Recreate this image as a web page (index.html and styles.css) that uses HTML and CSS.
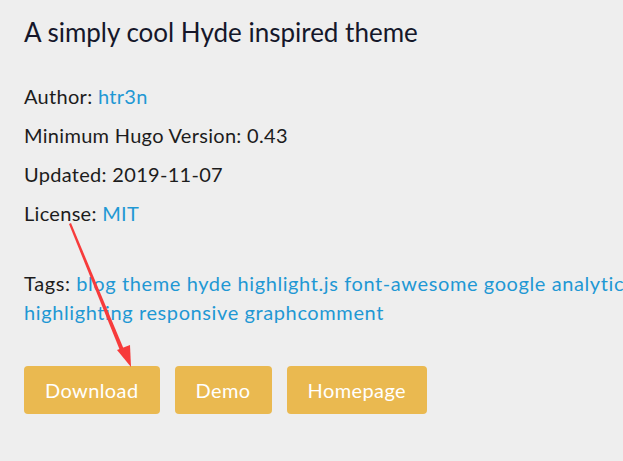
FILE: index.html
```html
<!DOCTYPE html>
<html>
<head>
<meta charset="utf-8">
<link rel="stylesheet" href="styles.css">
</head>
<body>
<main class="theme">
  <h1 class="title">A simply cool Hyde inspired theme</h1>
  <p class="meta">Author: <a href="#">htr3n</a></p>
  <p class="meta">Minimum Hugo Version: 0.43</p>
  <p class="meta">Updated: 2019-11-07</p>
  <p class="meta">License: <a href="#">MIT</a></p>
  <p class="tags">Tags: <a href="#">blog</a> <a href="#">theme</a> <a href="#">hyde</a> <a href="#">highlight.js</a> <a href="#">font-awesome</a> <a href="#">google analytics</a> <a href="#">syntax</a> <a href="#">highlighting</a> <a href="#">responsive</a> <a href="#">graphcomment</a></p>
  <div class="actions">
    <a class="btn" href="#">Download</a>
    <a class="btn" href="#">Demo</a>
    <a class="btn" href="#">Homepage</a>
  </div>
</main>
<svg class="arrow" width="623" height="461" viewBox="0 0 623 461">
  <polygon fill="#f73b3b" points="69,224 71,223 125,352 121,353"/>
  <polygon fill="#f73b3b" points="117,350 130,345 131,367"/>
</svg>
</body>
</html>
```
FILE: styles.css
```css
html, body {
  margin: 0;
  padding: 0;
  background: #eeeeee;
  overflow: hidden;
}
body {
  width: 623px;
  height: 461px;
  font-family: "Lato", "Noto Sans", sans-serif;
  color: #1c1c1c;
}
.theme {
  padding: 14px 0 0 24px;
  white-space: nowrap;
  overflow: hidden;
}
.title {
  font-size: 26px;
  font-weight: 400;
  color: #15172a;
  margin: 0 0 27px;
  line-height: 36px;
}
.meta {
  margin: 0;
  font-size: 20px;
  letter-spacing: 0.3px;
  line-height: 39px;
}
a {
  color: #1f98d4;
  text-decoration: none;
}
.tags {
  margin: 36px 0 0;
  font-size: 20px;
  letter-spacing: 0.6px;
  line-height: 29px;
  white-space: normal;
  width: 720px;
}
.actions {
  display: flex;
  gap: 15px;
  margin-top: 39px;
}
.btn {
  background: #eab950;
  color: #ffffff;
  font-size: 20px;
  letter-spacing: 0.4px;
  height: 48px;
  line-height: 48px;
  padding: 0 21px;
  border-radius: 4px;
}
.arrow {
  position: absolute;
  left: 0;
  top: 0;
  pointer-events: none;
}
```
